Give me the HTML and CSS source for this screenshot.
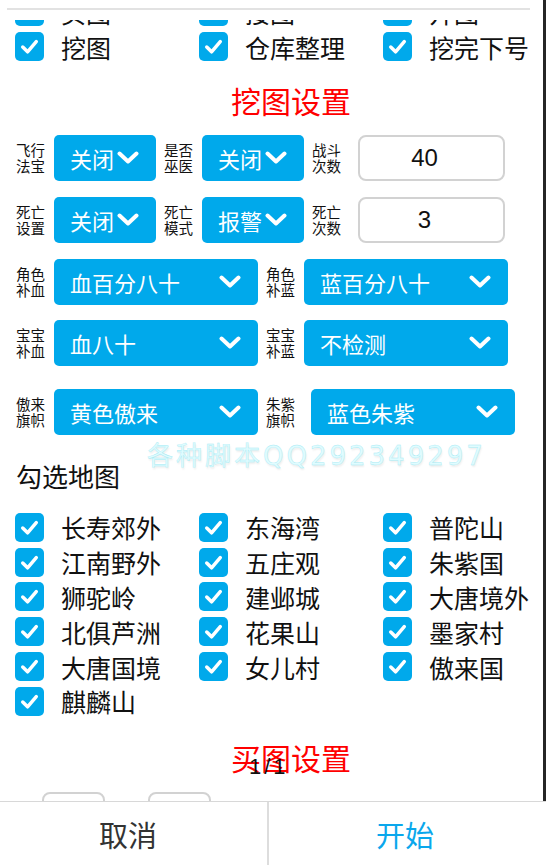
FILE: index.html
```html
<!DOCTYPE html>
<html lang="zh-CN">
<head>
<meta charset="utf-8">
<title>挖图设置</title>
<link rel="stylesheet" href="styles.css">
</head>
<body>
<div class="screen">
  <div class="main">
    <div class="topline"></div>
    <div class="viewport">
      <div class="content">
        <div class="cgrid">
          <div class="citem"><span class="cb"><svg viewBox="0 0 30 30"><path d="M8 15.5 L13 20.5 L22 10"/></svg></span>买图</div>
          <div class="citem"><span class="cb"><svg viewBox="0 0 30 30"><path d="M8 15.5 L13 20.5 L22 10"/></svg></span>接图</div>
          <div class="citem"><span class="cb"><svg viewBox="0 0 30 30"><path d="M8 15.5 L13 20.5 L22 10"/></svg></span>开图</div>
          <div class="citem"><span class="cb"><svg viewBox="0 0 30 30"><path d="M8 15.5 L13 20.5 L22 10"/></svg></span>挖图</div>
          <div class="citem"><span class="cb"><svg viewBox="0 0 30 30"><path d="M8 15.5 L13 20.5 L22 10"/></svg></span>仓库整理</div>
          <div class="citem"><span class="cb"><svg viewBox="0 0 30 30"><path d="M8 15.5 L13 20.5 L22 10"/></svg></span>挖完下号</div>
        </div>

        <div class="title t1">挖图设置</div>

        <div class="srow r1">
          <div class="slabel">飞行<br>法宝</div>
          <div class="dd short"><span>关闭</span><svg class="chev" viewBox="0 0 22 14"><path d="M2.5 2.5 L11 10.5 L19.5 2.5"/></svg></div>
          <div class="slabel">是否<br>巫医</div>
          <div class="dd short"><span>关闭</span><svg class="chev" viewBox="0 0 22 14"><path d="M2.5 2.5 L11 10.5 L19.5 2.5"/></svg></div>
          <div class="slabel">战斗<br>次数</div>
          <div class="num">40</div>
        </div>

        <div class="srow r2">
          <div class="slabel">死亡<br>设置</div>
          <div class="dd short"><span>关闭</span><svg class="chev" viewBox="0 0 22 14"><path d="M2.5 2.5 L11 10.5 L19.5 2.5"/></svg></div>
          <div class="slabel">死亡<br>模式</div>
          <div class="dd short"><span>报警</span><svg class="chev" viewBox="0 0 22 14"><path d="M2.5 2.5 L11 10.5 L19.5 2.5"/></svg></div>
          <div class="slabel">死亡<br>次数</div>
          <div class="num">3</div>
        </div>

        <div class="srow r3">
          <div class="slabel">角色<br>补血</div>
          <div class="dd long"><span>血百分八十</span><svg class="chev" viewBox="0 0 22 14"><path d="M2.5 2.5 L11 10.5 L19.5 2.5"/></svg></div>
          <div class="slabel">角色<br>补蓝</div>
          <div class="dd long"><span>蓝百分八十</span><svg class="chev" viewBox="0 0 22 14"><path d="M2.5 2.5 L11 10.5 L19.5 2.5"/></svg></div>
        </div>

        <div class="srow r4">
          <div class="slabel">宝宝<br>补血</div>
          <div class="dd long"><span>血八十</span><svg class="chev" viewBox="0 0 22 14"><path d="M2.5 2.5 L11 10.5 L19.5 2.5"/></svg></div>
          <div class="slabel">宝宝<br>补蓝</div>
          <div class="dd long"><span>不检测</span><svg class="chev" viewBox="0 0 22 14"><path d="M2.5 2.5 L11 10.5 L19.5 2.5"/></svg></div>
        </div>

        <div class="srow r5">
          <div class="slabel">傲来<br>旗帜</div>
          <div class="dd long"><span>黄色傲来</span><svg class="chev" viewBox="0 0 22 14"><path d="M2.5 2.5 L11 10.5 L19.5 2.5"/></svg></div>
          <div class="slabel">朱紫<br>旗帜</div>
          <div class="dd long shifted"><span>蓝色朱紫</span><svg class="chev" viewBox="0 0 22 14"><path d="M2.5 2.5 L11 10.5 L19.5 2.5"/></svg></div>
        </div>

        <div class="subhead">勾选地图</div>

        <div class="cgrid maps">
          <div class="citem"><span class="cb"><svg viewBox="0 0 30 30"><path d="M8 15.5 L13 20.5 L22 10"/></svg></span>长寿郊外</div>
          <div class="citem"><span class="cb"><svg viewBox="0 0 30 30"><path d="M8 15.5 L13 20.5 L22 10"/></svg></span>东海湾</div>
          <div class="citem"><span class="cb"><svg viewBox="0 0 30 30"><path d="M8 15.5 L13 20.5 L22 10"/></svg></span>普陀山</div>
          <div class="citem"><span class="cb"><svg viewBox="0 0 30 30"><path d="M8 15.5 L13 20.5 L22 10"/></svg></span>江南野外</div>
          <div class="citem"><span class="cb"><svg viewBox="0 0 30 30"><path d="M8 15.5 L13 20.5 L22 10"/></svg></span>五庄观</div>
          <div class="citem"><span class="cb"><svg viewBox="0 0 30 30"><path d="M8 15.5 L13 20.5 L22 10"/></svg></span>朱紫国</div>
          <div class="citem"><span class="cb"><svg viewBox="0 0 30 30"><path d="M8 15.5 L13 20.5 L22 10"/></svg></span>狮驼岭</div>
          <div class="citem"><span class="cb"><svg viewBox="0 0 30 30"><path d="M8 15.5 L13 20.5 L22 10"/></svg></span>建邺城</div>
          <div class="citem"><span class="cb"><svg viewBox="0 0 30 30"><path d="M8 15.5 L13 20.5 L22 10"/></svg></span>大唐境外</div>
          <div class="citem"><span class="cb"><svg viewBox="0 0 30 30"><path d="M8 15.5 L13 20.5 L22 10"/></svg></span>北俱芦洲</div>
          <div class="citem"><span class="cb"><svg viewBox="0 0 30 30"><path d="M8 15.5 L13 20.5 L22 10"/></svg></span>花果山</div>
          <div class="citem"><span class="cb"><svg viewBox="0 0 30 30"><path d="M8 15.5 L13 20.5 L22 10"/></svg></span>墨家村</div>
          <div class="citem"><span class="cb"><svg viewBox="0 0 30 30"><path d="M8 15.5 L13 20.5 L22 10"/></svg></span>大唐国境</div>
          <div class="citem"><span class="cb"><svg viewBox="0 0 30 30"><path d="M8 15.5 L13 20.5 L22 10"/></svg></span>女儿村</div>
          <div class="citem"><span class="cb"><svg viewBox="0 0 30 30"><path d="M8 15.5 L13 20.5 L22 10"/></svg></span>傲来国</div>
          <div class="citem"><span class="cb"><svg viewBox="0 0 30 30"><path d="M8 15.5 L13 20.5 L22 10"/></svg></span>麒麟山</div>
        </div>

        <div class="title t2">买图设置</div>

        <div class="brow">
          <div class="bbox"></div>
          <div class="bbox"></div>
        </div>
      </div>
    </div>
    <div class="watermark">各种脚本QQ292349297</div>
    <div class="pager">1/1</div>
  </div>
  <div class="bottombar">
    <div class="btn cancel">取消</div>
    <div class="btn start">开始</div>
  </div>
</div>
</body>
</html>
```

FILE: styles.css
```css
* { box-sizing: border-box; }

html, body {
  margin: 0;
  padding: 0;
  background: #ffffff;
}

body {
  width: 546px;
  height: 865px;
  overflow: hidden;
  font-family: "Noto Sans CJK SC", "Noto Sans", sans-serif;
  color: #111111;
}

.screen {
  width: 546px;
  height: 865px;
  display: flex;
  flex-direction: column;
}

.main {
  position: relative;
  height: 801px;
  flex: none;
  display: flex;
  flex-direction: column;
  border-right: 3px solid #262626;
  overflow: hidden;
}

.topline {
  flex: none;
  height: 2px;
  margin: 8px 13px 0 7px;
  background: #e2e2e2;
}

.viewport {
  flex: 1;
  margin-top: 10px;
  overflow: hidden;
}

.content {
  width: 582px;
  margin-top: -26px;
}

/* checkbox grids */
.cgrid {
  display: grid;
  grid-template-columns: 184px 184px 184px;
  grid-auto-rows: 35px;
  padding-left: 15px;
}

.citem {
  display: flex;
  align-items: center;
  gap: 17px;
  font-size: 25px;
  line-height: 30px;
  white-space: nowrap;
  color: #111111;
}

.cb {
  flex: none;
  width: 29px;
  height: 29px;
  border-radius: 5px;
  background: #00a9eb;
  display: flex;
  align-items: center;
  justify-content: center;
}

.cb svg {
  width: 29px;
  height: 29px;
}

.cb path {
  fill: none;
  stroke: #ffffff;
  stroke-width: 3.6;
  stroke-linecap: round;
  stroke-linejoin: round;
}

/* titles */
.title {
  text-align: center;
  color: #ff0000;
  font-size: 30px;
  line-height: 36px;
  height: 36px;
}

.t1 { margin-top: 18px; }
.t2 { margin-top: 20px; }

/* settings rows */
.srow {
  display: flex;
  align-items: center;
  gap: 8px;
  height: 46px;
  padding-left: 16px;
}

.r1 { margin-top: 17px; }
.r2 { margin-top: 16px; }
.r3 { margin-top: 16px; }
.r4 { margin-top: 15px; }
.r5 { margin-top: 23px; }

.slabel {
  flex: none;
  width: 30px;
  font-size: 14.5px;
  line-height: 16px;
  color: #111111;
  white-space: nowrap;
}

.dd {
  flex: none;
  height: 46px;
  border-radius: 5px;
  background: #00a9eb;
  color: #ffffff;
  font-size: 22px;
  display: flex;
  align-items: center;
  justify-content: space-between;
  padding: 0 17px 0 16px;
  white-space: nowrap;
}

.dd.short { width: 102px; }
.dd.long { width: 204px; }
.dd.shifted { margin-left: 7px; }

.chev {
  width: 22px;
  height: 14px;
  flex: none;
}

.chev path {
  fill: none;
  stroke: #ffffff;
  stroke-width: 4;
  stroke-linecap: round;
  stroke-linejoin: round;
}

.num {
  flex: none;
  width: 147px;
  height: 46px;
  margin-left: 8px;
  border: 2px solid #d2d2d2;
  border-radius: 8px;
  display: flex;
  align-items: center;
  justify-content: center;
  padding-right: 14px;
  font-family: "Liberation Sans", Arial, sans-serif;
  font-size: 24px;
  color: #111111;
}

.subhead {
  margin-top: 25px;
  padding-left: 16px;
  font-size: 26px;
  line-height: 32px;
  color: #111111;
}

.maps {
  margin-top: 18px;
  grid-auto-rows: 34.8px;
}

.brow {
  display: flex;
  gap: 43px;
  padding-left: 42px;
  margin-top: 17px;
}

.bbox {
  width: 63px;
  height: 46px;
  border: 2px solid #d2d2d2;
  border-radius: 8px;
}

/* overlays */
.watermark {
  position: absolute;
  left: 147px;
  top: 441px;
  font-size: 26px;
  line-height: 30px;
  letter-spacing: 3px;
  color: #e0fcff;
  -webkit-text-stroke: 0.4px #a8ebf4;
  text-shadow: 1px 2px 2px rgba(0, 0, 0, 0.07);
  white-space: nowrap;
  font-family: "DejaVu Sans", "Noto Sans CJK SC", sans-serif;
  font-weight: normal;
}

.pager {
  position: absolute;
  left: 249px;
  top: 756px;
  font-family: "Liberation Sans", Arial, sans-serif;
  font-size: 22px;
  line-height: 22px;
  letter-spacing: 3px;
  color: #111111;
}

/* bottom bar */
.bottombar {
  flex: none;
  height: 64px;
  display: flex;
  border-top: 1px solid #d8d8d8;
  background: #ffffff;
}

.btn {
  flex: 1;
  display: flex;
  align-items: center;
  justify-content: center;
  font-size: 29px;
}

.cancel {
  flex: none;
  width: 269px;
  padding-right: 11px;
  color: #333333;
  border-right: 2px solid #dddddd;
}

.start {
  padding-right: 5px;
  color: #0aa7ec;
}
```
